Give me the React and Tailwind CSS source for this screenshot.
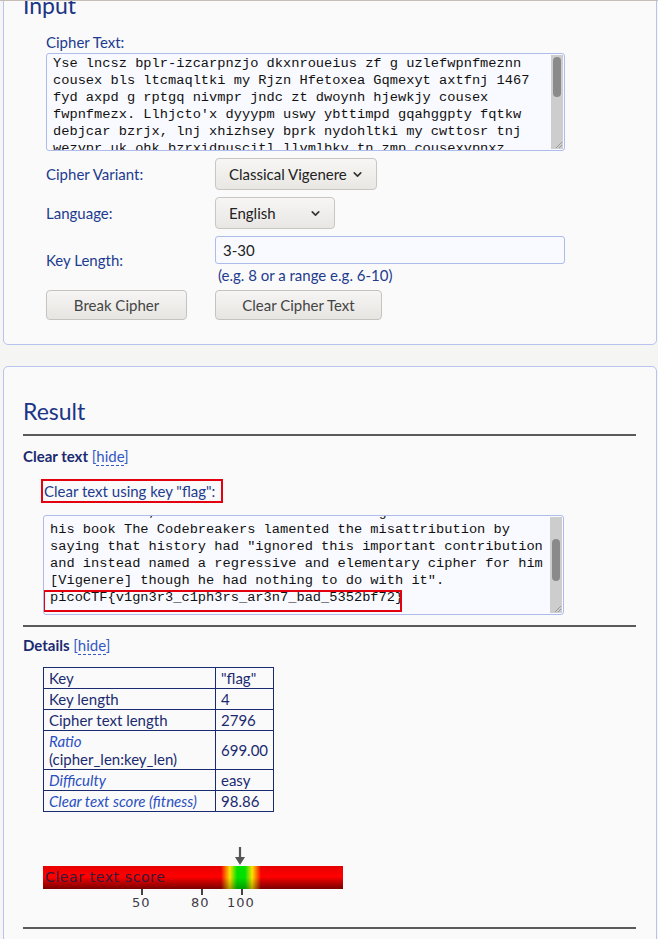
import { ChevronDown } from "lucide-react";

const cipherLines = [
  "Yse lncsz bplr-izcarpnzjo dkxnroueius zf g uzlefwpnfmeznn",
  "cousex bls ltcmaqltki my Rjzn Hfetoxea Gqmexyt axtfnj 1467",
  "fyd axpd g rptgq nivmpr jndc zt dwoynh hjewkjy cousex",
  "fwpnfmezx. Llhjcto'x dyyypm uswy ybttimpd gqahggpty fqtkw",
  "debjcar bzrjx, lnj xhizhsey bprk nydohltki my cwttosr tnj",
  "wezvpr uk ohk bzrxidpuscitl llvmlbkv tn zmp cousexvpnxz",
];

const clearLines = [
  "Then critics, like the well known and big names in the field",
  "his book The Codebreakers lamented the misattribution by",
  'saying that history had "ignored this important contribution',
  "and instead named a regressive and elementary cipher for him",
  '[Vigenere] though he had nothing to do with it".',
  "picoCTF{v1gn3r3_c1ph3rs_ar3n7_bad_5352bf72}",
];

const details = [
  { k: "Key", v: '"flag"' },
  { k: "Key length", v: "4" },
  { k: "Cipher text length", v: "2796" },
  { k: "Ratio", sub: "(cipher_len:key_len)", v: "699.00", italic: true },
  { k: "Difficulty", v: "easy", italic: true },
  { k: "Clear text score (fitness)", v: "98.86", italic: true },
];

function Scrollbar({ thumbTop, thumbHeight }) {
  return (
    <div className="absolute right-px top-px bottom-px w-[12px] bg-[#cdcdcd]">
      <div
        className="absolute left-[2px] w-[8px] rounded-full bg-[#8a8a8a]"
        style={{ top: thumbTop, height: thumbHeight }}
      />
      <svg className="absolute right-0 bottom-0" width="10" height="10" viewBox="0 0 10 10">
        <path d="M9 3 L3 9 M9 6 L6 9" stroke="#9a9a9a" strokeWidth="1" />
      </svg>
    </div>
  );
}

function HideLink() {
  return (
    <span className="font-normal text-[#3458c4]">
      [<span className="border-b border-dashed border-[#3458c4]">hide</span>]
    </span>
  );
}

function SelectBox({ label, width }) {
  return (
    <div
      className={`flex h-[32px] items-center justify-between rounded-[4px] border border-[#c9c6c2] bg-[linear-gradient(#f7f6f4,#e9e7e4)] pl-[13px] pr-[12px] text-[15px] text-[#222] ${width}`}
    >
      <span>{label}</span>
      <ChevronDown size={13} strokeWidth={3} className="text-[#333]" />
    </div>
  );
}

export default function App() {
  return (
    <div className="min-h-[939px] overflow-hidden bg-[#f5f5f4] pb-10 font-['Lato',sans-serif] text-[#1d3b8f]">
      <div className="relative z-10 h-px bg-[#c6bdb6]" />

      {/* Input panel */}
      <div className="-mt-[30px] ml-[3px] w-[654px] rounded-[5px] border border-[#b8c3ef] bg-[#fafafa] pb-[24px] pl-[19px] pr-[20px] pt-[20px]">
        <h2 className="-mt-[2px] text-[23px] leading-[30px] text-[#1a3585]">Input</h2>

        <div className="ml-[23px]">
          <div className="mt-[12px] text-[15px] leading-[20px]">Cipher Text:</div>
          <div className="relative mt-px h-[98px] w-[519px] overflow-hidden rounded-[3px] border border-[#aebcec] bg-[#f9faff] pl-[6px] pt-[1px] font-['Liberation_Mono',monospace] text-[13.7px] leading-[17px] text-[#111]">
            {cipherLines.map((l, i) => (
              <div key={i} className="whitespace-pre">{l}</div>
            ))}
            <Scrollbar thumbTop={2} thumbHeight={40} />
          </div>

          <div className="mt-[7px] flex items-center">
            <div className="w-[169px] text-[15px]">Cipher Variant:</div>
            <SelectBox label="Classical Vigenere" width="w-[162px]" />
          </div>

          <div className="mt-[7px] flex items-center">
            <div className="w-[169px] text-[15px]">Language:</div>
            <SelectBox label="English" width="w-[120px]" />
          </div>

          <div className="mt-[7px] flex items-center">
            <div className="w-[169px] text-[15px]">Key Length:</div>
            <div>
              <div className="flex h-[28px] w-[350px] items-center rounded-[3px] border border-[#aebcec] bg-[#f9faff] pl-[7px] text-[15px] text-[#222]">
                3-30
              </div>
              <div className="mt-[2px] pl-[3px] text-[15px] leading-[18px]">(e.g. 8 or a range e.g. 6-10)</div>
            </div>
          </div>

          <div className="mt-[6px] flex">
            <button className="h-[30px] w-[141px] rounded-[4px] border border-[#c6c3bf] bg-[linear-gradient(#f6f5f3,#e7e5e2)] text-[15px] text-[#444]">
              Break Cipher
            </button>
            <button className="ml-[28px] h-[30px] w-[167px] rounded-[4px] border border-[#c6c3bf] bg-[linear-gradient(#f6f5f3,#e7e5e2)] text-[15px] text-[#444]">
              Clear Cipher Text
            </button>
          </div>
        </div>
      </div>

      {/* Result panel */}
      <div className="ml-[3px] mt-[21px] w-[654px] rounded-[5px] border border-[#b8c3ef] bg-[#fafafa] pb-[10px] pl-[19px] pr-[20px] pt-[29px]">
        <h2 className="text-[23px] leading-[30px] text-[#1a3585]">Result</h2>
        <div className="mt-[8px] h-[2px] bg-[#5a5a5a]" />

        <div className="mt-[10px] text-[15px] font-bold leading-[20px] text-[#1a2a70]">
          Clear text <HideLink />
        </div>

        <div className="ml-[18px] mt-[13px] inline-flex h-[24px] items-center border-2 border-[#e3000f] pl-[1px] pr-[6px] text-[15px]">
          Clear text using key "flag":
        </div>

        <div className="relative ml-[20px] mt-[12px] h-[100px] w-[521px] overflow-hidden rounded-[3px] border border-[#aebcec] bg-[#f9faff] pl-[6px] font-['Liberation_Mono',monospace] text-[13.7px] leading-[17px] text-[#111]">
          <div className="-mt-[12px]">
            {clearLines.map((l, i) => (
              <div key={i} className="whitespace-pre">{l}</div>
            ))}
          </div>
          <div className="absolute left-[-1px] top-[74px] h-[22px] w-[359px] border-2 border-[#e3000f]" />
          <Scrollbar thumbTop={22} thumbHeight={42} />
        </div>

        <div className="mt-[10px] h-[2px] bg-[#5a5a5a]" />

        <div className="mt-[8px] text-[15px] font-bold leading-[20px] text-[#1a2a70]">
          Details <HideLink />
        </div>

        <table className="ml-[20px] mt-[12px] border-collapse text-[15px] leading-[18px] text-[#1a2a70]">
          <tbody>
            {details.map((d) => (
              <tr key={d.k}>
                <td className="w-[172px] border border-[#1a2a70] px-[5px] py-px">
                  <span className={d.italic ? "italic text-[#2a4fc2]" : ""}>{d.k}</span>
                  {d.sub && <div>{d.sub}</div>}
                </td>
                <td className="w-[55px] border border-[#1a2a70] px-[5px] py-px">{d.v}</td>
              </tr>
            ))}
          </tbody>
        </table>

        {/* score bar */}
        <div className="ml-[20px] mt-[35px] w-[300px] font-['DejaVu_Sans',sans-serif]">
          <div className="relative h-[19px]">
            <svg className="absolute left-[191px] top-0" width="12" height="19" viewBox="0 0 12 19">
              <path d="M6 0 V12" stroke="#555" strokeWidth="2.2" />
              <path d="M1 10 L6 18 L11 10 Z" fill="#555" />
            </svg>
          </div>
          <div className="relative h-[23px] overflow-hidden bg-[linear-gradient(#e60000,#ff0000_45%,#b00000)]">
            <div className="absolute left-[178px] top-0 h-full w-[40px] bg-[linear-gradient(90deg,rgba(255,0,0,0),#ffe000_22%,#00e000_40%,#00e000_60%,#ffe000_78%,rgba(255,0,0,0))]" />
            <div className="absolute inset-0 bg-[linear-gradient(rgba(0,0,0,0),rgba(0,0,0,0)_50%,rgba(0,0,0,0.3))]" />
            <div className="absolute left-[2px] top-[2px] text-[14px] font-medium leading-[18px] tracking-[0.6px] text-[#35183a]">
              Clear text score
            </div>
          </div>
          <div className="relative h-[22px] text-[13px] text-[#3f3a48]">
            <div className="absolute left-[98px] top-0 h-[6px] w-[2px] bg-[#444]" />
            <div className="absolute left-[158px] top-0 h-[6px] w-[2px] bg-[#444]" />
            <div className="absolute left-[198px] top-0 h-[6px] w-[2px] bg-[#444]" />
            <span className="absolute left-[89px] top-[4px] tracking-[1px]">50</span>
            <span className="absolute left-[148px] top-[4px] tracking-[1px]">80</span>
            <span className="absolute left-[184px] top-[4px] tracking-[1px]">100</span>
          </div>
        </div>

        <div className="mt-[16px] h-[2px] bg-[#5a5a5a]" />
        <div className="h-[20px]" />
      </div>
    </div>
  );
}
